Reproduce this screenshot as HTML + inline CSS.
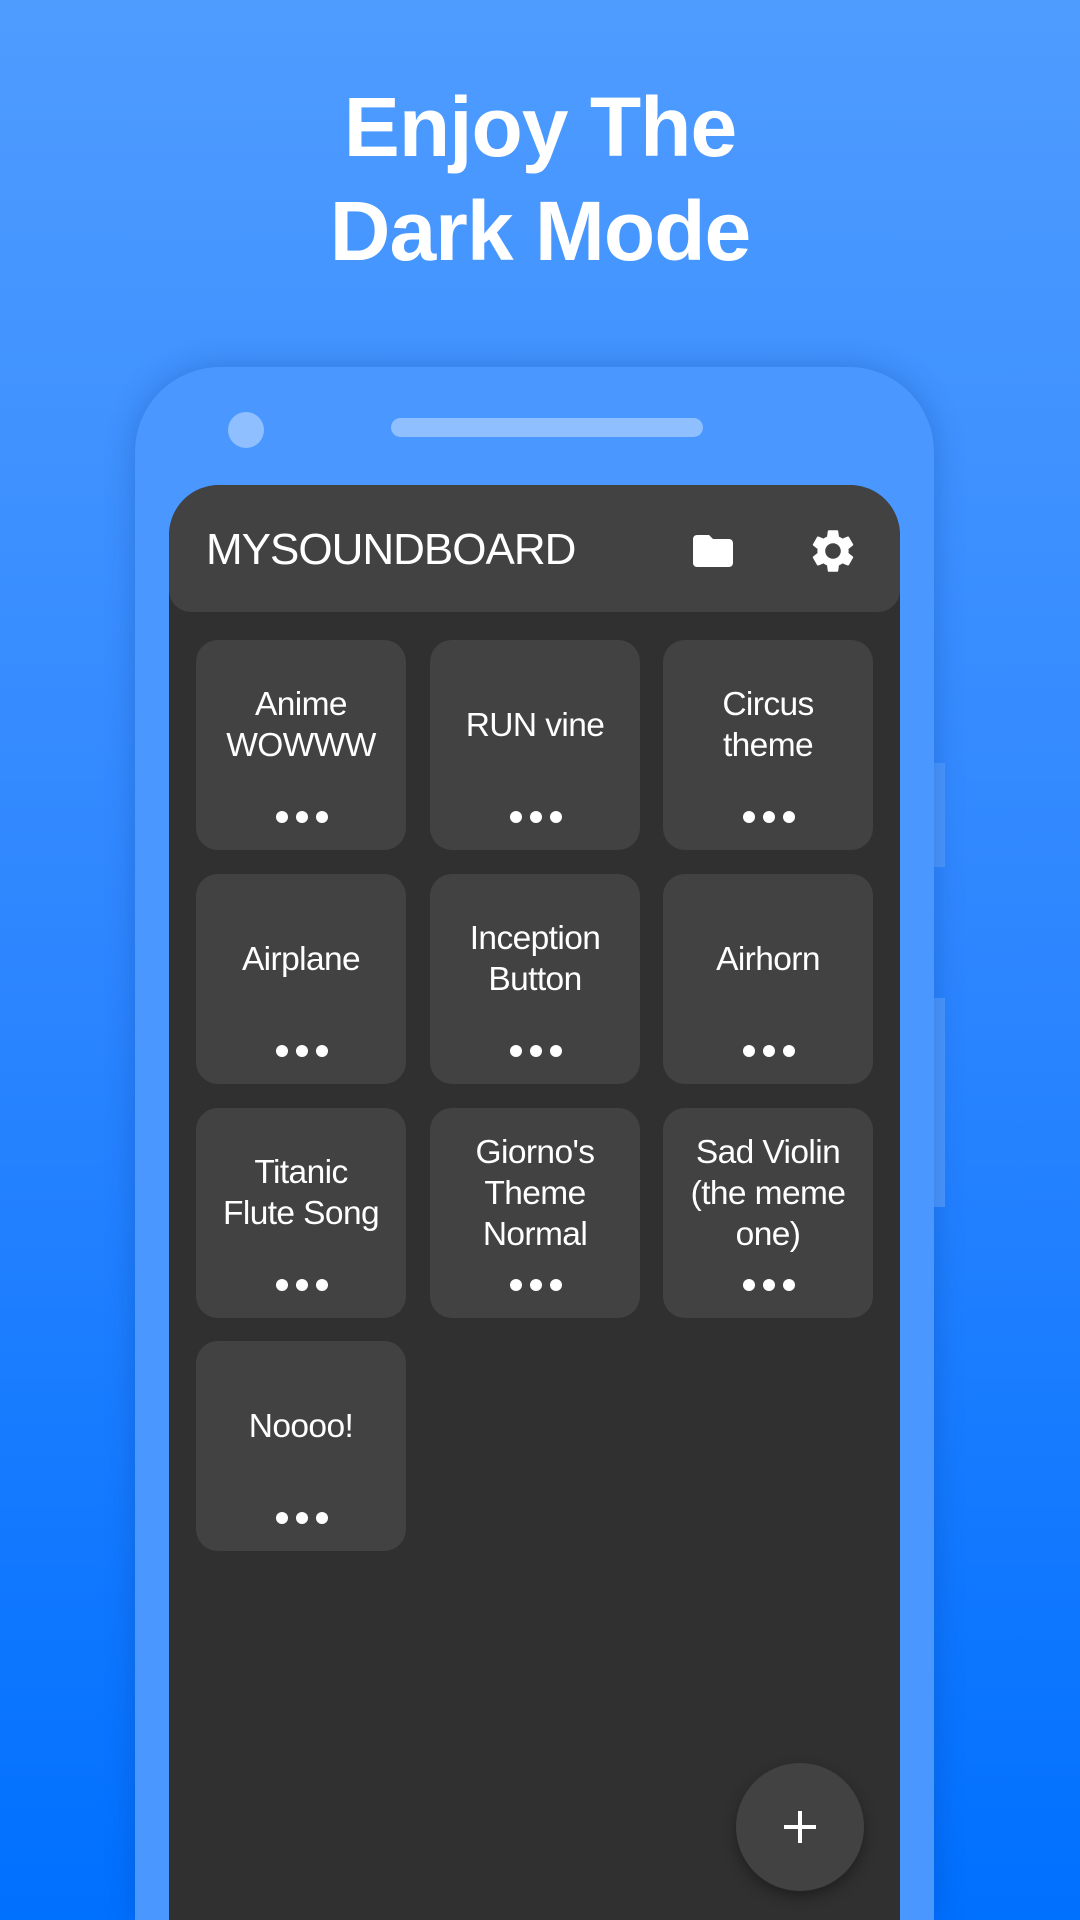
<!DOCTYPE html>
<html><head><meta charset="utf-8"><style>
*{margin:0;padding:0;box-sizing:border-box}
html,body{width:1080px;height:1920px;overflow:hidden}
body{font-family:"Liberation Sans",sans-serif}
#w{position:relative;width:1080px;height:1920px;overflow:hidden;background:linear-gradient(180deg,#4f9cff 0%,#2d86ff 50%,#0070ff 100%)}
h1{position:absolute;top:75px;left:0;width:1080px;text-align:center;color:#fff;font-size:84px;line-height:104px;font-weight:bold;letter-spacing:-1px}
.phone{position:absolute;left:135px;top:367px;width:799px;height:1553px;background:#4a98ff;border-radius:85px 85px 0 0;box-shadow:0 0 30px rgba(0,40,120,.25)}
.btn{position:absolute;left:934px;width:11px;background:#4a98ff}
.cam{position:absolute;left:228px;top:412px;width:36px;height:36px;border-radius:50%;background:#8fbfff}
.spk{position:absolute;left:391px;top:418px;width:312px;height:19px;border-radius:10px;background:#8fbfff}
.screen{position:absolute;left:169px;top:485px;width:731px;height:1435px;background:#303030;border-radius:50px 50px 0 0;overflow:hidden}
.hdr{position:absolute;left:0;top:0;width:731px;height:127px;background:#424242;border-radius:50px 50px 22px 22px}
.title{position:absolute;left:37px;top:40px;color:#fff;font-size:44px;letter-spacing:-1px}
.tile{position:absolute;width:210px;height:210px;background:#424242;border-radius:22px;color:#fff;text-align:center;font-size:33.5px;line-height:41px;letter-spacing:-.6px}
.tile .t{position:absolute;left:0;right:0;top:0;height:170px;display:flex;align-items:center;justify-content:center}
.dots{position:absolute;left:80px;top:171px;width:52px;height:12px}
.dots i{position:absolute;top:0;width:12px;height:12px;border-radius:50%;background:#fff}
.fab{position:absolute;left:736px;top:1763px;width:128px;height:128px;border-radius:50%;background:#424242;box-shadow:0 6px 14px rgba(0,0,0,.35)}
</style></head><body><div id="w">
<h1>Enjoy The<br>Dark Mode</h1>
<div class="btn" style="top:763px;height:104px"></div>
<div class="btn" style="top:998px;height:209px"></div>
<div class="phone"></div>
<div class="cam"></div><div class="spk"></div>
<div class="screen">
<div class="hdr"><div class="title">MYSOUNDBOARD</div>
<svg style="position:absolute;left:520px;top:42px" width="48" height="48" viewBox="0 0 24 24"><path fill="#fff" d="M10 4H4c-1.1 0-2 .9-2 2v12c0 1.1.9 2 2 2h16c1.1 0 2-.9 2-2V8c0-1.1-.9-2-2-2h-8l-2-2z"/></svg>
<svg style="position:absolute;left:638px;top:40px" width="52" height="52" viewBox="0 0 24 24"><path fill="#fff" d="M19.14 12.94c.04-.3.06-.61.06-.94 0-.32-.02-.64-.07-.94l2.030-1.58a.49.49 0 0 0 .12-.61l-1.92-3.32a.488.488 0 0 0-.59-.22l-2.39.96c-.5-.38-1.03-.7-1.62-.94l-.36-2.54a.484.484 0 0 0-.48-.41h-3.84c-.24 0-.43.17-.47.41l-.36 2.54c-.59.24-1.13.57-1.62.94l-2.39-.96c-.22-.08-.47 0-.59.22L2.74 8.87c-.12.21-.08.47.12.61l2.03 1.58c-.05.3-.09.63-.09.94s.02.64.07.94l-2.03 1.58a.49.49 0 0 0-.12.61l1.92 3.32c.12.22.37.29.59.22l2.39-.96c.5.38 1.03.7 1.62.94l.36 2.54c.05.24.24.41.48.41h3.84c.24 0 .44-.17.47-.41l.36-2.54c.59-.24 1.130-.56 1.62-.94l2.39.96c.22.08.47 0 .59-.22l1.92-3.32c.12-.22.07-.47-.12-.61l-2.01-1.58zM12 15.6c-1.98 0-3.6-1.62-3.6-3.6s1.62-3.6 3.6-3.6 3.6 1.62 3.6 3.6-1.62 3.6-3.6 3.6z"/></svg>
</div>
<div class="tile" style="left:27px;top:155px"><div class="t">Anime<br>WOWWW</div><div class="dots"><i style="left:0"></i><i style="left:20px"></i><i style="left:40px"></i></div></div>
<div class="tile" style="left:261px;top:155px"><div class="t">RUN vine</div><div class="dots"><i style="left:0"></i><i style="left:20px"></i><i style="left:40px"></i></div></div>
<div class="tile" style="left:494px;top:155px"><div class="t">Circus<br>theme</div><div class="dots"><i style="left:0"></i><i style="left:20px"></i><i style="left:40px"></i></div></div>
<div class="tile" style="left:27px;top:389px"><div class="t">Airplane</div><div class="dots"><i style="left:0"></i><i style="left:20px"></i><i style="left:40px"></i></div></div>
<div class="tile" style="left:261px;top:389px"><div class="t">Inception<br>Button</div><div class="dots"><i style="left:0"></i><i style="left:20px"></i><i style="left:40px"></i></div></div>
<div class="tile" style="left:494px;top:389px"><div class="t">Airhorn</div><div class="dots"><i style="left:0"></i><i style="left:20px"></i><i style="left:40px"></i></div></div>
<div class="tile" style="left:27px;top:623px"><div class="t">Titanic<br>Flute Song</div><div class="dots"><i style="left:0"></i><i style="left:20px"></i><i style="left:40px"></i></div></div>
<div class="tile" style="left:261px;top:623px"><div class="t">Giorno's<br>Theme<br>Normal</div><div class="dots"><i style="left:0"></i><i style="left:20px"></i><i style="left:40px"></i></div></div>
<div class="tile" style="left:494px;top:623px"><div class="t">Sad Violin<br>(the meme<br>one)</div><div class="dots"><i style="left:0"></i><i style="left:20px"></i><i style="left:40px"></i></div></div>
<div class="tile" style="left:27px;top:856px"><div class="t">Noooo!</div><div class="dots"><i style="left:0"></i><i style="left:20px"></i><i style="left:40px"></i></div></div>
</div>
<div class="fab"><svg style="position:absolute;left:44px;top:44px" width="40" height="40" viewBox="0 0 40 40"><path d="M20 4v32M4 20h32" stroke="#fff" stroke-width="4"/></svg></div>
</div></body></html>
